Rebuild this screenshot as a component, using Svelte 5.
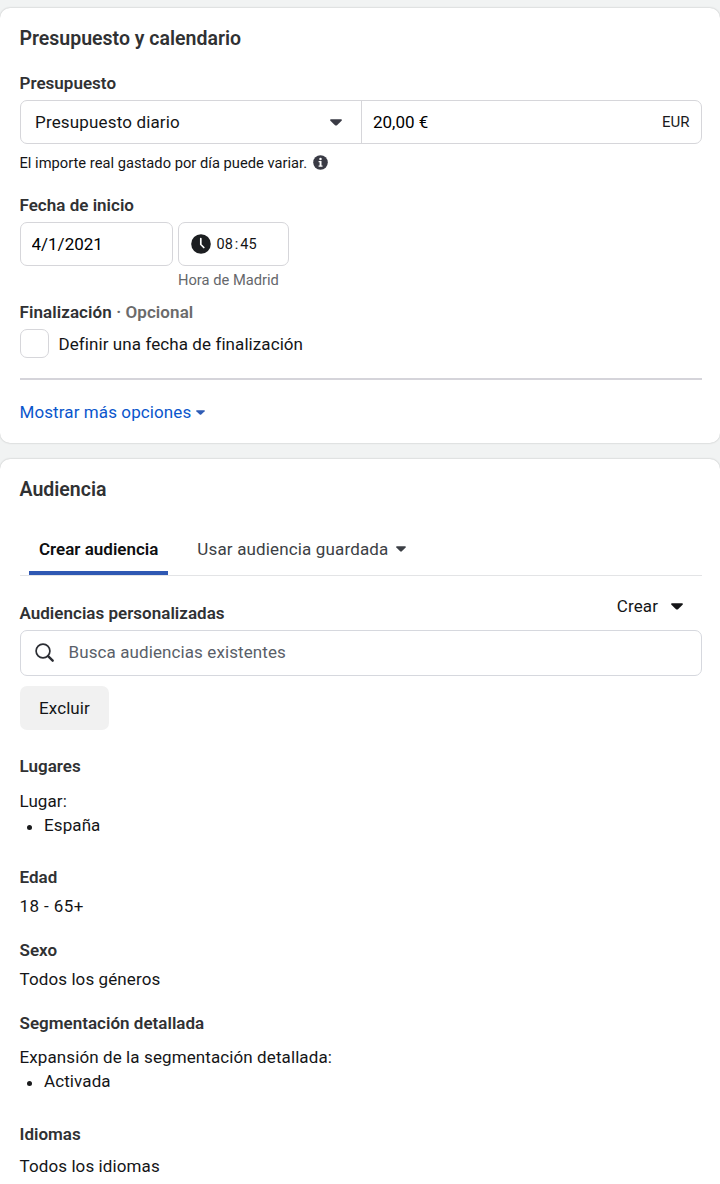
<script lang="ts">
  let budgetType = 'Presupuesto diario';
  let amount = '20,00 €';
  let startDate = '4/1/2021';
  let startTime = { hours: '08', minutes: '45' };
  let hasEndDate = false;
  let search = '';
  let activeTab = 'create';
</script>

{#snippet caret(width: number, height: number)}
  <svg class="caret" {width} {height} viewBox="0 0 12 8" preserveAspectRatio="none">
    <path d="M1.2 0.3h9.6c1 0 1.4 1 .8 1.7L7 7.1c-.6.6-1.4.6-2 0L.4 2C-.2 1.3.2.3 1.2.3z" fill="currentColor" />
  </svg>
{/snippet}

<div class="page">
  <section class="card budget">
    <h2>Presupuesto y calendario</h2>

    <h3 class="budget-label">Presupuesto</h3>
    <div class="field-group">
      <button type="button" class="select">
        <span class="select-text">{budgetType}</span>
        {@render caret(12, 7)}
      </button>
      <div class="amount">
        <input type="text" class="amount-input" bind:value={amount} />
        <span class="currency">EUR</span>
      </div>
    </div>
    <p class="helper">
      <span class="helper-text">El importe real gastado por día puede variar.</span>
      <svg width="15" height="15" viewBox="0 0 15 15">
        <circle cx="7.5" cy="7.5" r="7.3" fill="#3a3b45" />
        <circle cx="7.5" cy="3.9" r="1.25" fill="#fff" />
        <path d="M5.6 6.1h2.9v4.5h1v1.2H5.6v-1.2h1V7.3h-1z" fill="#fff" />
      </svg>
    </p>

    <h3 class="start-label">Fecha de inicio</h3>
    <div class="start-row">
      <input type="text" class="box date" bind:value={startDate} />
      <div class="time-column">
        <div class="box time">
          <svg width="20" height="20" viewBox="0 0 20 20">
            <circle cx="10" cy="10" r="9.8" fill="#1c1e21" />
            <path d="M9.8 4.5v6l3 3" fill="none" stroke="#fff" stroke-width="1.7" stroke-linecap="round" />
          </svg>
          <span class="clock">{startTime.hours}<span class="colon">:</span>{startTime.minutes}</span>
        </div>
        <span class="timezone">Hora de Madrid</span>
      </div>
    </div>

    <h3 class="end-label">Finalización <span class="optional">· Opcional</span></h3>
    <label class="check-row">
      <input type="checkbox" class="checkbox" bind:checked={hasEndDate} />
      <span class="check-text">Definir una fecha de finalización</span>
    </label>

    <hr />
    <button type="button" class="more">
      <span class="more-text">Mostrar más opciones</span>
      {@render caret(9, 5)}
    </button>
  </section>

  <section class="card audience">
    <h2>Audiencia</h2>

    <div class="tabs">
      <button
        type="button"
        class="tab {activeTab === 'create' ? 'active' : ''}"
        on:click={() => (activeTab = 'create')}
      >
        <span class="tab-text">Crear audiencia</span>
      </button>
      <button
        type="button"
        class="tab {activeTab === 'saved' ? 'active' : ''}"
        on:click={() => (activeTab = 'saved')}
      >
        <span class="tab-text">Usar audiencia guardada</span>
        {@render caret(10, 6)}
      </button>
    </div>

    <div class="custom-head">
      <h3>Audiencias personalizadas</h3>
      <button type="button" class="create">
        <span class="create-text">Crear</span>
        {@render caret(12, 7)}
      </button>
    </div>
    <div class="search">
      <svg width="20" height="20" viewBox="0 0 20 20">
        <circle cx="8" cy="8" r="6.9" fill="none" stroke="#2b2d33" stroke-width="1.7" />
        <path d="M13.1 13.1l4.6 4.6" stroke="#2b2d33" stroke-width="2.4" stroke-linecap="round" />
      </svg>
      <input type="text" class="search-input" placeholder="Busca audiencias existentes" bind:value={search} />
    </div>
    <button type="button" class="exclude">Excluir</button>

    <div class="group places">
      <h3>Lugares</h3>
      <p>Lugar:</p>
      <ul>
        <li>España</li>
      </ul>
    </div>
    <div class="group age">
      <h3>Edad</h3>
      <p>18 - 65+</p>
    </div>
    <div class="group">
      <h3>Sexo</h3>
      <p>Todos los géneros</p>
    </div>
    <div class="group targeting">
      <h3>Segmentación detallada</h3>
      <p>Expansión de la segmentación detallada:</p>
      <ul>
        <li>Activada</li>
      </ul>
    </div>
    <div class="group languages">
      <h3>Idiomas</h3>
      <p>Todos los idiomas</p>
    </div>
  </section>
</div>

<style>
:global(body) {
  margin: 0;
  background-color: #f1f3f3;
}

.page {
  box-sizing: border-box;
  width: 720px;
  height: 1184px;
  padding-top: 8px;
  overflow: hidden;
  display: flex;
  flex-direction: column;
  gap: 16px;
  font-family: Roboto, "Liberation Sans", sans-serif;
  font-size: 17px;
  line-height: 20px;
  letter-spacing: 0.1px;
  color: #141517;
}

.card {
  box-sizing: border-box;
  flex-shrink: 0;
  padding: 19px 18.5px 0 19.5px;
  background-color: #fff;
  border-radius: 10px;
  box-shadow: 0 0 2px rgba(0, 0, 0, 0.25);
}

.budget {
  height: 435px;
}

.audience {
  height: 740px;
}

h2, h3, p, ul {
  margin: 0;
}

h2 {
  font-size: 19.5px;
  line-height: 24px;
  letter-spacing: 0;
  font-weight: 600;
  color: #303133;
}

h3 {
  font-size: 17px;
  line-height: 20px;
  letter-spacing: 0.02px;
  font-weight: 600;
  color: #303133;
}

button,
input {
  margin: 0;
  padding: 0;
  border: none;
  outline: none;
  background: none;
  font: inherit;
  letter-spacing: inherit;
  color: inherit;
  text-align: left;
}

button {
  cursor: pointer;
}

svg {
  display: block;
  flex-shrink: 0;
}

.budget-label {
  margin-top: 22px;
}

.field-group {
  box-sizing: border-box;
  display: flex;
  height: 44px;
  margin-top: 7px;
  border: 1px solid #d6d6da;
  border-radius: 7px;
}

.select {
  box-sizing: border-box;
  display: flex;
  align-items: center;
  justify-content: space-between;
  width: 341px;
  padding: 0 18.5px 0 14.5px;
  border-right: 1px solid #d6d6da;
}

.select-text {
  letter-spacing: 0.16px;
}

.select .caret {
  color: #3a3b45;
}

.amount {
  flex: 1;
  display: flex;
  align-items: center;
  justify-content: space-between;
  padding: 0 11px 0 11.5px;
  color: #000;
}

.amount-input {
  width: 200px;
  letter-spacing: 0;
}

.currency {
  font-size: 15px;
  letter-spacing: 0;
  color: #1a1b1d;
}

.helper {
  display: flex;
  align-items: center;
  gap: 6px;
  margin-top: 9px;
  font-size: 14.7px;
  letter-spacing: 0.01px;
}

.helper svg {
  margin-bottom: 2px;
}

.start-label {
  margin-top: 22px;
}

.start-row {
  display: flex;
  gap: 5px;
  margin-top: 7px;
}

.box {
  box-sizing: border-box;
  height: 44px;
  border: 1px solid #d6d6da;
  border-radius: 7px;
}

.date {
  width: 153px;
  padding: 0 11px;
  letter-spacing: 0;
  color: #000;
}

.time {
  display: flex;
  align-items: center;
  gap: 6px;
  width: 111px;
  padding-left: 12px;
}

.clock {
  padding-top: 2px;
  font-size: 14.5px;
  letter-spacing: 0;
}

.colon {
  margin: 0 2px;
}

.timezone {
  display: block;
  margin-top: 4px;
  padding-left: 0.5px;
  font-size: 14.7px;
  letter-spacing: 0;
  color: #65676b;
}

.end-label {
  margin-top: 12px;
  letter-spacing: 0.08px;
}

.optional {
  color: #6b6b6b;
}

.check-row {
  display: flex;
  align-items: center;
  gap: 10px;
  margin-top: 7px;
}

.check-text {
  letter-spacing: 0.08px;
}

.checkbox {
  appearance: none;
  box-sizing: border-box;
  width: 29px;
  height: 29px;
  border: 1px solid #d6d6da;
  border-radius: 7px;
}

hr {
  height: 2px;
  margin: 20px 0 0;
  border: none;
  background-color: #d5d4da;
}

.more {
  display: flex;
  align-items: center;
  gap: 5px;
  margin-top: 22px;
  color: #0a56cc;
}

.more .caret {
  color: #2f5cb5;
}

.tabs {
  display: flex;
  box-sizing: border-box;
  height: 56px;
  margin-top: 18px;
  padding-left: 9.5px;
  border-bottom: 1px solid #e3e4e6;
}

.tab {
  box-sizing: border-box;
  display: flex;
  align-items: center;
  gap: 7px;
  padding: 6px 10px 0;
  border-bottom: 4px solid transparent;
  letter-spacing: 0.15px;
  color: #3c3f45;
}

.tab + .tab {
  margin-left: 19px;
}

.tab.active {
  font-weight: 600;
  letter-spacing: 0;
  color: #0d0e10;
  border-bottom-color: #2f58b3;
}

.custom-head {
  display: flex;
  justify-content: space-between;
  align-items: flex-end;
  margin-top: 20px;
}

.custom-head h3 {
  margin-top: 7px;
}

.create {
  display: flex;
  align-items: center;
  gap: 13px;
  margin-right: 18.5px;
  margin-bottom: 7px;
}

.search {
  box-sizing: border-box;
  display: flex;
  align-items: center;
  gap: 13.5px;
  height: 46px;
  margin-top: 7px;
  padding-left: 14.5px;
  border: 1px solid #d6d8de;
  border-radius: 7px;
}

.search-input {
  flex: 1;
  padding-bottom: 2px;
}

.search-input::placeholder {
  color: #5a5f69;
  opacity: 1;
}

.exclude {
  height: 44px;
  margin-top: 10px;
  padding: 0 19.5px;
  border-radius: 7px;
  background-color: #f1f1f1;
}

.group {
  margin-top: 24px;
}

.group p {
  margin-top: 9px;
}

.group ul {
  list-style: none;
  padding-left: 7px;
}

.group li {
  display: flex;
  align-items: center;
  line-height: 24px;
  margin-top: 2px;
}

.group li::before {
  content: '';
  width: 5px;
  height: 5px;
  margin: 4px 12.5px 0 0;
  border-radius: 50%;
  background-color: #1a1b1d;
}

.group.places {
  margin-top: 26px;
}

.group.places p {
  margin-top: 15px;
}

.group.age {
  margin-top: 30px;
}

.group.age p {
  letter-spacing: 0.4px;
}

.group.targeting p {
  margin-top: 14px;
}

.group.languages {
  margin-top: 31px;
}

.group.languages p {
  margin-top: 12px;
}
</style>
